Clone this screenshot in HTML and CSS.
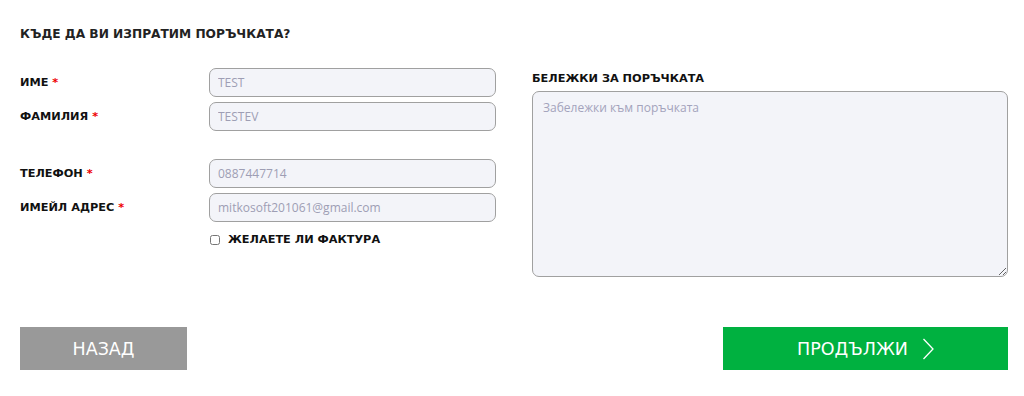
FILE: index.html
```html
<!DOCTYPE html>
<html lang="bg">

<head>
  <meta charset="UTF-8">
  <meta name="viewport" content="width=device-width, initial-scale=1.0">
  <title>Поръчка</title>
  <link rel="stylesheet" href="styles.css">
</head>

<body>

  <div class="checkout">
    <h2 class="title">КЪДЕ ДА ВИ ИЗПРАТИМ ПОРЪЧКАТА?</h2>

    <div class="fields">
      <div class="left">
        <div class="row">
          <label>ИМЕ <span class="req">*</span></label>
          <input type="text" value="TEST">
        </div>
        <div class="row">
          <label>ФАМИЛИЯ <span class="req">*</span></label>
          <input type="text" value="TESTEV">
        </div>
        <div class="row spaced">
          <label>ТЕЛЕФОН <span class="req">*</span></label>
          <input type="text" value="0887447714">
        </div>
        <div class="row">
          <label>ИМЕЙЛ АДРЕС <span class="req">*</span></label>
          <input type="text" value="mitkosoft201061@gmail.com">
        </div>
        <div class="row">
          <span></span>
          <label class="invoice"><input type="checkbox"> ЖЕЛАЕТЕ ЛИ ФАКТУРА</label>
        </div>
      </div>

      <div class="right">
        <label class="notes-label">БЕЛЕЖКИ ЗА ПОРЪЧКАТА</label>
        <textarea placeholder="Забележки към поръчката"></textarea>
      </div>
    </div>

    <div class="buttons">
      <button class="btn back">НАЗАД</button>
      <button class="btn next">ПРОДЪЛЖИ
        <svg width="12" height="22" viewBox="0 0 12 22"><path d="M1.5 1 L11 11 L1.5 21" fill="none" stroke="#fff" stroke-width="1.3"/></svg>
      </button>
    </div>
  </div>

</body>

</html>
```

FILE: styles.css
```css
body {
  margin: 0;
  background-color: #fff;
  font-family: "DejaVu Sans", sans-serif;
}

.checkout {
  padding: 26px 16px 0 20px;
}

.title {
  margin: 0;
  font-size: 12.2px;
  line-height: 16px;
  font-weight: bold;
  color: #222;
}

.fields {
  display: flex;
  gap: 36px;
  margin-top: 26px;
}

.left {
  display: flex;
  flex-direction: column;
  gap: 5px;
}

.row {
  display: grid;
  grid-template-columns: 189px 287px;
  align-items: center;
}

.row.spaced {
  margin-top: 23px;
}

.row label {
  font-size: 11.3px;
  font-weight: bold;
  color: #111;
}

.req {
  color: #e00;
}

.row input[type="text"] {
  box-sizing: border-box;
  height: 29px;
  border: 1px solid #a0a0a0;
  border-radius: 7px;
  background-color: #f3f4f9;
  padding: 0 8px;
  font-family: "Open Sans", sans-serif;
  font-size: 12px;
  color: #9e9eb4;
}

.row .invoice {
  display: flex;
  align-items: center;
  gap: 8px;
  margin-top: 6px;
  font-size: 11.3px;
}

.invoice input {
  margin: 0 0 0 1px;
  width: 10px;
  height: 10px;
}

.right {
  flex: 1;
  display: flex;
  flex-direction: column;
  margin-top: 4px;
}

.notes-label {
  font-size: 11.3px;
  font-weight: bold;
  line-height: 14px;
  color: #111;
  margin-bottom: 5px;
}

textarea {
  box-sizing: border-box;
  height: 186px;
  border: 1px solid #a0a0a0;
  border-radius: 7px;
  background-color: #f3f4f9;
  padding: 7px 10px;
  font-family: "Open Sans", sans-serif;
  font-size: 12px;
  resize: vertical;
}

textarea::placeholder {
  color: #a3a3bc;
}

.buttons {
  display: flex;
  justify-content: space-between;
  margin-top: 50px;
}

.btn {
  height: 43px;
  border: none;
  color: #fff;
  font-family: "DejaVu Sans", sans-serif;
  font-size: 17.5px;
  display: flex;
  align-items: center;
  justify-content: center;
  gap: 14px;
}

.back {
  width: 167px;
  background-color: #999;
}

.next {
  width: 285px;
  background-color: #00b140;
}
```
